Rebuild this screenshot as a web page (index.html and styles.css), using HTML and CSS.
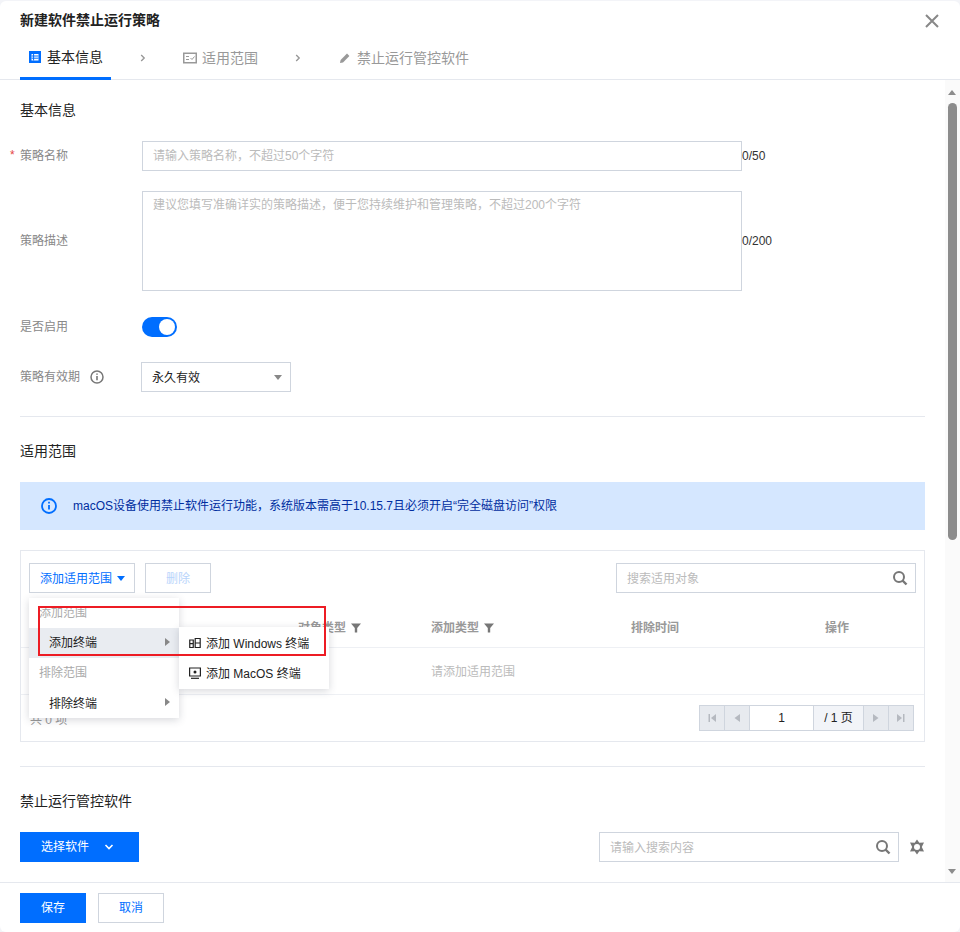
FILE: index.html
```html
<!DOCTYPE html>
<html lang="zh-CN">
<head>
<meta charset="utf-8">
<title>新建软件禁止运行策略</title>
<link rel="stylesheet" href="styles.css">
</head>
<body>
<div class="dialog">
  <header class="head">
    <div class="title-row">
      <h1 class="title">新建软件禁止运行策略</h1>
      <svg class="close" width="14" height="14" viewBox="0 0 14 14"><path d="M1 1l12 12M13 1L1 13" stroke="#888" stroke-width="2" fill="none"/></svg>
    </div>
    <nav class="tabs">
      <div class="tab active">
        <svg width="12" height="12" viewBox="0 0 12 12"><rect width="12" height="12" fill="#006eff"/><path d="M2.5 3h7v6.5h-7z" fill="#fff"/><path d="M2.5 5h7M2.5 7.2h7M4.6 3v6.5" stroke="#006eff" fill="none"/></svg>
        <span>基本信息</span>
      </div>
      <svg class="chev c1" width="6" height="8" viewBox="0 0 6 8"><path d="M1.2 1l3 3-3 3" stroke="#999" stroke-width="1.4" fill="none"/></svg>
      <div class="tab t2">
        <svg width="14" height="12" viewBox="0 0 14 12"><rect x=".75" y="1.25" width="12.5" height="9.5" fill="none" stroke="#999" stroke-width="1.5"/><path d="M3 4.5h3M3 7.5h3M7.5 6l1.5 1.5L11.5 4.5" stroke="#999" fill="none"/></svg>
        <span>适用范围</span>
      </div>
      <svg class="chev c2" width="6" height="8" viewBox="0 0 6 8"><path d="M1.2 1l3 3-3 3" stroke="#999" stroke-width="1.4" fill="none"/></svg>
      <div class="tab t3">
        <svg width="12" height="12" viewBox="0 0 12 12"><path d="M1 11l.6-3L8 1.6 10.400 4 4 10.400z" fill="#999"/></svg>
        <span>禁止运行管控软件</span>
      </div>
    </nav>
  </header>

  <div class="scroll-wrap">
    <main class="content">
      <h2 class="section first">基本信息</h2>
      <div class="row r-name">
        <label class="label"><i class="req">*</i>策略名称</label>
        <div class="field input-text">请输入策略名称，不超过50个字符</div>
        <span class="count">0/50</span>
      </div>
      <div class="row r-desc">
        <label class="label">策略描述</label>
        <div class="field area">建议您填写准确详实的策略描述，便于您持续维护和管理策略，不超过200个字符</div>
        <span class="count">0/200</span>
      </div>
      <div class="row r-toggle">
        <label class="label">是否启用</label>
        <span class="toggle"><span class="knob"></span></span>
      </div>
      <div class="row r-valid">
        <label class="label">策略有效期
          <svg class="info" width="14" height="14" viewBox="0 0 14 14"><circle cx="7" cy="7" r="6" fill="none" stroke="#777" stroke-width="1.500"/><path d="M7 6v4.200M7 3.400v1.400" stroke="#777" stroke-width="1.600"/></svg>
        </label>
        <div class="select">永久有效<i class="caret"></i></div>
      </div>
      <hr class="divider d1">
      <h2 class="section s2">适用范围</h2>
      <div class="alert">
        <svg width="16" height="16" viewBox="0 0 16 16"><circle cx="8" cy="8" r="7" fill="none" stroke="#006eff" stroke-width="1.800"/><path d="M8 7v4.500M8 3.800v1.700" stroke="#006eff" stroke-width="1.800"/></svg>
        <span>macOS设备使用禁止软件运行功能，系统版本需高于10.15.7且必须开启“完全磁盘访问”权限</span>
      </div>
      <section class="panel">
        <div class="toolbar">
          <div class="btn-line">添加适用范围<i class="caret blue"></i></div>
          <div class="btn-dis">删除</div>
          <div class="search s-table"><span>搜索适用对象</span>
            <svg width="16" height="16" viewBox="0 0 16 16"><circle cx="7" cy="7" r="5" fill="none" stroke="#777" stroke-width="2"/><path d="M10.500 10.500l4 4" stroke="#777" stroke-width="2.400"/></svg>
          </div>
        </div>
        <div class="thead">
          <span class="c-type">对象类型<svg class="filter" width="10" height="10" viewBox="0 0 10 10"><path d="M0 .5h10L6.200 5v4.500H3.800V5z" fill="#777"/></svg></span>
          <span>添加类型<svg class="filter" width="10" height="10" viewBox="0 0 10 10"><path d="M0 .5h10L6.200 5v4.500H3.800V5z" fill="#777"/></svg></span>
          <span>排除时间</span>
          <span>操作</span>
        </div>
        <div class="tbody"><span class="empty">请添加适用范围</span></div>
        <div class="tfoot">
          <span class="total">共 0 项</span>
          <div class="pager">
            <span class="pg"><svg width="10" height="10" viewBox="0 0 10 10"><path d="M1.500 1h1.500v8H1.500zM9 1v8L4 5z" fill="#b5b9c0"/></svg></span>
            <span class="pg"><svg width="10" height="10" viewBox="0 0 10 10"><path d="M8 1v8L2.500 5z" fill="#b5b9c0"/></svg></span>
            <span class="pg-input">1</span>
            <span class="pg-total">/ 1 页</span>
            <span class="pg"><svg width="10" height="10" viewBox="0 0 10 10"><path d="M2 1v8l5.500-4z" fill="#b5b9c0"/></svg></span>
            <span class="pg"><svg width="10" height="10" viewBox="0 0 10 10"><path d="M7 1h1.500v8H7zM1 1v8l5-4z" fill="#b5b9c0"/></svg></span>
          </div>
        </div>
      </section>
      <hr class="divider d2">
      <h2 class="section s3">禁止运行管控软件</h2>
      <div class="soft-bar">
        <div class="btn-primary wide">选择软件<svg width="10" height="8" viewBox="0 0 10 8"><path d="M1.500 2l3.500 3.500L8.500 2" stroke="#fff" stroke-width="1.600" fill="none"/></svg></div>
        <div class="search s-soft"><span>请输入搜索内容</span>
          <svg width="16" height="16" viewBox="0 0 16 16"><circle cx="7" cy="7" r="5" fill="none" stroke="#777" stroke-width="2"/><path d="M10.500 10.500l4 4" stroke="#777" stroke-width="2.400"/></svg>
        </div>
        <svg class="gear" width="16" height="16" viewBox="0 0 16 16"><path d="M8 .5l2.300 3.300 4.700-.2-2.200 4.400 2.200 4.400-4.700-.2L8 15.500l-2.300-3.300-4.700.2L3.200 8 1 3.600l4.700.2z" fill="#777"/><circle cx="8" cy="8" r="3" fill="#fff"/></svg>
      </div>
    </main>
    <aside class="scrollbar">
      <i class="arrow up"></i>
      <div class="thumb"></div>
      <i class="arrow down"></i>
    </aside>
  </div>

  <footer class="foot">
    <div class="btn-primary save">保存</div>
    <div class="btn-cancel">取消</div>
  </footer>

  <div class="menu">
    <div class="m-head">添加范围</div>
    <div class="m-item hover">添加终端<i class="tri"></i></div>
    <div class="m-head">排除范围</div>
    <div class="m-item last">排除终端<i class="tri"></i></div>
  </div>
  <div class="submenu">
    <div class="s-item">
      <svg width="12" height="12" viewBox="0 0 12 12"><path d="M.75 3h3.500v7.500H.75zM.75 6.700h3.500" fill="none" stroke="#222" stroke-width="1.200"/><path d="M6.200 1.500h5v9h-5zM6.200 6h5" fill="none" stroke="#222" stroke-width="1.200"/></svg>
      <span>添加 Windows 终端</span>
    </div>
    <div class="s-item">
      <svg width="12" height="12" viewBox="0 0 12 12"><path d="M.6 1h10.800v8H.6z" fill="none" stroke="#222" stroke-width="1.200"/><path d="M2 11.300h8" stroke="#222" stroke-width="1.200"/><circle cx="6" cy="5" r="1.500" fill="#222"/></svg>
      <span>添加 MacOS 终端</span>
    </div>
  </div>
  <div class="annotation"></div>
</div>
</body>
</html>
```

FILE: styles.css
```css
* { box-sizing: border-box; }
html, body { margin: 0; padding: 0; height: 100%; overflow: hidden; }
body {
  font-family: "Liberation Sans", "Noto Sans CJK SC", sans-serif;
  font-size: 12px;
  color: #333;
  background: #f3f4f8;
}
.dialog {
  position: relative;
  width: 960px;
  height: 931px;
  margin-top: 1px;
  background: #fff;
  border-radius: 6px;
  display: flex;
  flex-direction: column;
  overflow: hidden;
}
.head {
  height: 79px;
  flex: none;
  border-bottom: 1px solid #e5e8ee;
  padding: 0 20px;
  position: relative;
}
.title-row { display: flex; justify-content: space-between; align-items: center; height: 38px; }
.title { margin: 0; font-size: 14px; font-weight: 700; line-height: 38px; color: #222; }
.close { margin-right: 1px; margin-top: 2px; }
.tabs { display: flex; align-items: center; height: 41px; }
.tab { display: flex; align-items: center; gap: 6px; height: 41px; font-size: 14px; color: #999; padding-bottom: 4px; }
.tab span { margin-bottom: 2px; }
.tab.active { width: 91px; padding-left: 9px; color: #222; border-bottom: 3px solid #006eff; padding-bottom: 2px; }
.chev { margin-bottom: 4px; }
.c1 { margin-left: 29px; }
.t2 { margin-left: 37px; gap: 5px; }
.c2 { margin-left: 37px; }
.t3 { margin-left: 38px; gap: 6px; }
.scroll-wrap { flex: none; height: 802px; display: flex; overflow: hidden; }
.content { width: 945px; flex: none; padding: 0 20px; height: 802px; overflow: hidden; }
.section { margin: 0; font-size: 14px; font-weight: 400; color: #222; line-height: 20px; }
.section.first { margin-top: 20px; }
.row { display: flex; }
.label { width: 122px; flex: none; color: #888; position: relative; display: flex; align-items: center; gap: 10px; padding-bottom: 4px; }
.req { position: absolute; left: -10px; top: 50%; margin-top: -8px; color: #e54545; font-style: normal; }
.field { width: 600px; border: 1px solid #cfd5de; color: #bbb; padding: 0 10px; }
.input-text { height: 30px; line-height: 28px; }
.count { color: #333; align-self: center; }
.r-name { margin-top: 21px; height: 30px; }
.r-desc { margin-top: 20px; height: 100px; }
.area { height: 100px; line-height: 26px; }
.r-toggle { margin-top: 26px; height: 20px; }
.toggle { width: 35px; height: 20px; background: #006eff; border-radius: 10px; position: relative; display: block; }
.knob { position: absolute; right: 2px; top: 2px; width: 16px; height: 16px; border-radius: 50%; background: #fff; }
.r-valid { margin-top: 25px; height: 30px; }
.r-valid .label { width: 121px; }
.info { flex: none; margin-top: 4px; }
.select { width: 150px; height: 30px; border: 1px solid #cfd5de; line-height: 30px; padding: 0 10px; color: #222; position: relative; }
.caret { position: absolute; width: 0; height: 0; border-style: solid; border-width: 5px 4px 0; border-color: #888 transparent transparent; right: 8px; top: 12px; }
.caret.blue { border-color: #006eff transparent transparent; right: 9px; top: 12px; }
.divider { border: 0; border-top: 1px solid #e5e8ee; margin: 0; }
.d1 { margin-top: 24px; }
.s2 { margin-top: 24px; }
.alert { margin-top: 21px; height: 48px; background: #d5e7ff; display: flex; align-items: center; padding-left: 21px; gap: 16px; color: #002da0; }
.alert span { margin-bottom: 4px; }
.panel { margin-top: 20px; height: 192px; border: 1px solid #e5e8ee; }
.toolbar { display: flex; padding: 12px 8px 0; height: 56px; }
.btn-line { width: 106px; height: 30px; border: 1px solid #cfd5de; color: #006eff; line-height: 30px; padding-left: 10px; position: relative; }
.btn-dis { width: 66px; height: 30px; margin-left: 10px; border: 1px solid #cfd5de; color: #b8d4fb; text-align: center; line-height: 30px; }
.search { width: 300px; height: 30px; border: 1px solid #cfd5de; display: flex; align-items: center; justify-content: space-between; padding: 0 7px 0 10px; color: #bbb; }
.search span { margin-bottom: 2px; }
.s-table { margin-left: auto; }
.thead { height: 41px; border-bottom: 1px solid #eef0f4; display: grid; grid-template-columns: 133px 200px 194px 1fr; padding-left: 277px; padding-bottom: 2px; align-items: center; color: #999; font-weight: 700; }
.filter { margin-left: 5px; vertical-align: -1px; }
.tbody { height: 47px; border-bottom: 1px solid #eef0f4; padding-left: 410px; line-height: 48px; color: #bbb; }
.tfoot { height: 46px; display: flex; justify-content: space-between; align-items: center; padding: 0 10px 0 9px; }
.total { color: #999; }
.pager { display: flex; height: 26px; border: 1px solid #cfd5de; color: #222; }
.pg { width: 25px; background: #e7eaef; border-right: 1px solid #cfd5de; display: flex; align-items: center; justify-content: center; }
.pg:last-child { border-right: 0; width: 24px; }
.pg-input { width: 64px; text-align: center; line-height: 24px; background: #fff; border-right: 1px solid #cfd5de; }
.pg-total { width: 50px; text-align: center; line-height: 24px; background: #f2f4f8; border-right: 1px solid #cfd5de; }
.d2 { margin-top: 24px; }
.s3 { margin-top: 24px; }
.soft-bar { margin-top: 21px; display: flex; align-items: center; height: 30px; }
.btn-primary { background: #006eff; color: #fff; height: 30px; line-height: 30px; text-align: center; }
.wide { width: 119px; display: flex; align-items: center; padding-left: 21px; gap: 15px; }
.s-soft { margin-left: auto; }
.gear { margin-left: 10px; flex: none; }
.scrollbar { width: 15px; flex: none; background: #fafafa; position: relative; height: 802px; }
.thumb { position: absolute; left: 3px; top: 23px; width: 9px; height: 437px; border-radius: 5px; background: #8c8c8c; }
.arrow { position: absolute; left: 3px; width: 0; height: 0; border-style: solid; border-color: transparent; border-width: 0 4.5px; }
.arrow.up { top: 10px; border-bottom: 5px solid #8c8c8c; }
.arrow.down { bottom: 8px; border-top: 5px solid #8c8c8c; }
.foot { flex: 1; border-top: 1px solid #e5e8ee; display: flex; gap: 12px; padding: 10px 20px 0; }
.save { width: 66px; }
.btn-cancel { width: 66px; height: 30px; border: 1px solid #cfd5de; color: #006eff; text-align: center; line-height: 28px; }
.menu { position: absolute; left: 29px; top: 597px; width: 150px; height: 120px; background: #fff; box-shadow: 0 2px 8px rgba(54,58,80,.2); }
.m-head { height: 30px; line-height: 30px; color: #aaa; padding-left: 10px; }
.m-head:first-child { line-height: 31px; }
.m-item { height: 30px; line-height: 30px; padding-left: 20px; color: #222; position: relative; }
.m-item.last { line-height: 32px; }
.m-item.hover { background: #e9ecf1; }
.tri { position: absolute; right: 9px; top: 10px; width: 0; height: 0; border-style: solid; border-width: 4px 0 4px 5px; border-color: transparent transparent transparent #888; }
.submenu { position: absolute; left: 179px; top: 626px; width: 150px; height: 62px; background: #fff; box-shadow: 0 2px 8px rgba(54,58,80,.2); padding-top: 1px; }
.s-item { display: flex; align-items: center; gap: 5px; height: 30px; padding-left: 10px; color: #222; }
.s-item span { margin-bottom: 2px; }
.annotation { position: absolute; left: 38px; top: 605px; width: 288px; height: 50px; border: 2px solid #ed1c24; }
```
